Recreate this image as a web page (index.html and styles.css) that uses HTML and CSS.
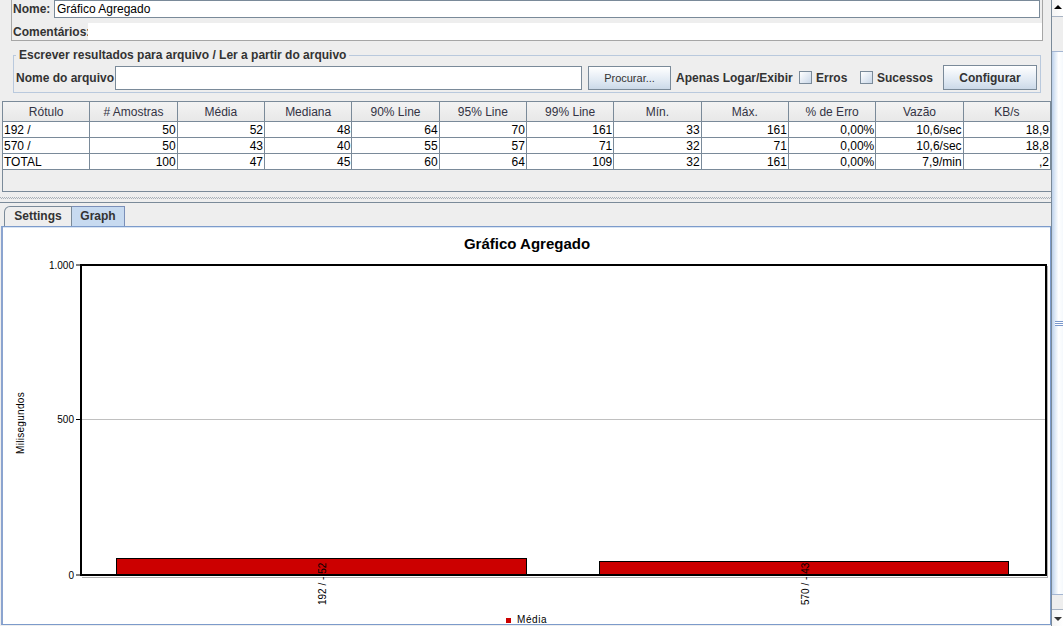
FILE: index.html
```html
<!DOCTYPE html>
<html>
<head>
<meta charset="utf-8">
<link rel="stylesheet" href="styles.css">
</head>
<body>
<div class="app">
  <div class="main">
    <div class="namebox">
      <div class="nrow">
        <span class="lbl lbl-nome">Nome:</span>
        <div class="nfield">Gráfico Agregado</div>
      </div>
      <div class="crow">
        <span class="lbl lbl-com">Comentários:</span>
        <div class="cfield"></div>
      </div>
    </div>
    <fieldset class="fs">
      <legend>Escrever resultados para arquivo / Ler a partir do arquivo</legend>
      <div class="frow">
        <span class="lbl lbl-file">Nome do arquivo</span>
        <div class="tfield"></div>
        <button class="btn btn-proc">Procurar...</button>
        <span class="lbl lbl-ap">Apenas Logar/Exibir</span>
        <span class="chk"></span><span class="lbl lbl-err">Erros</span>
        <span class="chk"></span><span class="lbl lbl-suc">Sucessos</span>
        <button class="btn btn-conf">Configurar</button>
      </div>
    </fieldset>
    <div class="pane">
      <table class="grid">
        <thead>
          <tr><th>Rótulo</th><th># Amostras</th><th>Média</th><th>Mediana</th><th>90% Line</th><th>95% Line</th><th>99% Line</th><th>Mín.</th><th>Máx.</th><th>% de Erro</th><th>Vazão</th><th>KB/s</th></tr>
        </thead>
        <tbody>
          <tr><td class="l">192 /</td><td>50</td><td>52</td><td>48</td><td>64</td><td>70</td><td>161</td><td>33</td><td>161</td><td>0,00%</td><td>10,6/sec</td><td>18,9</td></tr>
          <tr><td class="l">570 /</td><td>50</td><td>43</td><td>40</td><td>55</td><td>57</td><td>71</td><td>32</td><td>71</td><td>0,00%</td><td>10,6/sec</td><td>18,8</td></tr>
          <tr><td class="l">TOTAL</td><td>100</td><td>47</td><td>45</td><td>60</td><td>64</td><td>109</td><td>32</td><td>161</td><td>0,00%</td><td>7,9/min</td><td>,2</td></tr>
        </tbody>
      </table>
    </div>
    <div class="splitter"></div>
    <div class="lower">
      <div class="tabs">
        <div class="tab">Settings</div>
        <div class="tab sel">Graph</div>
      </div>
      <div class="tabpanel">
        <svg class="chart" width="1047" height="396" viewBox="3 228 1047 396" xmlns="http://www.w3.org/2000/svg">
          <text class="ctitle" x="527" y="249" text-anchor="middle">Gráfico Agregado</text>
          <line x1="82" y1="419.5" x2="1045" y2="419.5" stroke="#c0c0c0" stroke-width="1"/>
          <line x1="1047.5" y1="266" x2="1047.5" y2="578" stroke="#b0b0b0" stroke-width="1"/>
          <line x1="82" y1="577.5" x2="1048" y2="577.5" stroke="#b0b0b0" stroke-width="1"/>
          <rect x="116.5" y="558.5" width="410" height="17" fill="#cc0000" stroke="#000" stroke-width="1"/>
          <rect x="599.5" y="561.5" width="409" height="14" fill="#cc0000" stroke="#000" stroke-width="1"/>
          <rect x="81" y="265" width="965" height="310" fill="none" stroke="#000" stroke-width="2"/>
          <line x1="76" y1="265" x2="80" y2="265" stroke="#000"/>
          <line x1="76" y1="419.5" x2="80" y2="419.5" stroke="#000"/>
          <line x1="76" y1="575" x2="80" y2="575" stroke="#000"/>
          <text class="ytick" x="74" y="268.5" text-anchor="end">1.000</text>
          <text class="ytick" x="74" y="423" text-anchor="end">500</text>
          <text class="ytick" x="74" y="578.5" text-anchor="end">0</text>
          <text class="ylabel" transform="translate(24,423) rotate(-90)" text-anchor="middle">Milisegundos</text>
          <text class="blabel" transform="translate(326,605) rotate(-90)">192 / - 52</text>
          <text class="blabel" transform="translate(808.5,605) rotate(-90)">570 / - 43</text>
          <rect x="506" y="618" width="5" height="5" fill="#cc0000"/>
          <text class="legend" x="517" y="622.5">Média</text>
        </svg>
      </div>
    </div>
  </div>
  <div class="vscroll">
    <div class="sb-btn sb-up"><span class="tri-up"></span></div>
    <div class="sb-track sb-t1"></div>
    <div class="sb-thumb"><span class="grip"></span></div>
    <div class="sb-track sb-t2"></div>
    <div class="sb-btn sb-down"><span class="tri-down"></span></div>
  </div>
</div>
</body>
</html>
```

FILE: styles.css
```css
* { box-sizing: border-box; }
html, body { margin: 0; padding: 0; }
body {
  background: #eeeeee;
  font-family: "Liberation Sans", Arial, sans-serif;
  font-size: 12px;
  color: #000;
  overflow: hidden;
}
.app {
  display: flex;
  width: 1063px;
  height: 626px;
  overflow: hidden;
}
.main {
  width: 1051px;
  display: flex;
  flex-direction: column;
}
.lbl {
  font-weight: bold;
  color: #333333;
  white-space: nowrap;
}

/* name / comments box */
.namebox {
  margin-left: 11px;
  width: 1032px;
  height: 41px;
  border: 1px solid #a6a6a6;
  border-top: none;
  padding-left: 1px;
}
.nrow {
  display: flex;
  align-items: center;
  height: 18px;
}
.lbl-nome { width: 41px; }
.nfield {
  width: 986px;
  height: 18px;
  background: #fff;
  border: 1px solid #7a8a99;
  padding-left: 2px;
  line-height: 16px;
}
.crow {
  display: flex;
  align-items: center;
  margin-top: 5px;
  height: 17px;
}
.lbl-com { width: 75px; }
.cfield {
  flex: 1;
  height: 17px;
  background: #fff;
}

/* file fieldset */
.fs {
  margin: 7px 0 0 13px;
  width: 1028px;
  padding: 0 2px 2px 2px;
  border: 1px solid #b9c9dd;
  min-width: 0;
}
.fs legend {
  padding: 0 3px;
  font-weight: bold;
  color: #333333;
  line-height: 14px;
  font-size: 12px;
}
.frow {
  display: flex;
  align-items: center;
  margin-top: 3px;
  height: 25px;
}
.lbl-file { width: 99px; }
.tfield {
  width: 467px;
  height: 24px;
  background: #fff;
  border: 1px solid #7a8a99;
  margin-right: 6px;
}
.btn {
  font-family: "Liberation Sans", Arial, sans-serif;
  border: 1px solid #7a8a99;
  background: linear-gradient(#ffffff, #dce6f1 70%, #cbd9e8);
  color: #333333;
  padding: 0;
  margin: 0;
}
.btn-proc {
  width: 83px;
  height: 24px;
  font-size: 11px;
  margin-right: 5px;
}
.lbl-ap { width: 123px; }
.chk {
  width: 13px;
  height: 13px;
  border: 1px solid #7a8a99;
  background: linear-gradient(135deg, #ffffff, #c9d7e8);
  margin-right: 4px;
}
.lbl-err { width: 44px; }
.lbl-suc { width: 66px; }
.btn-conf {
  width: 94px;
  height: 25px;
  font-size: 12px;
  font-weight: bold;
}

/* results table */
.pane {
  margin-top: 8px;
  margin-left: 2px;
  width: 1049px;
  height: 91px;
  border: 1px solid #7a8a99;
  border-right: none;
}
.grid {
  width: 1048px;
  table-layout: fixed;
  border-collapse: separate;
  border-spacing: 0;
  font-size: 12px;
}
.grid th {
  height: 20px;
  padding: 0;
  font-weight: normal;
  color: #333344;
  text-align: center;
  background: linear-gradient(#f3f3f3, #e8e8e8);
  border-right: 1px solid #7a8a99;
  border-bottom: 1px solid #7a8a99;
  line-height: 18px;
}
.grid td {
  height: 16px;
  padding: 0 1px;
  text-align: right;
  background: #fff;
  border-right: 1px solid #7a8a99;
  border-bottom: 1px solid #7a8a99;
  line-height: 14px;
  white-space: nowrap;
}
.grid td.l { text-align: left; }

/* splitter */
.splitter {
  height: 10px;
  background: repeating-linear-gradient(90deg, #a8b0b8 0 1px, transparent 1px 2px) 0 5px / 100% 1px no-repeat,
              repeating-linear-gradient(90deg, transparent 0 1px, #a8b0b8 1px 2px) 0 6px / 100% 1px no-repeat;
}
.lower {
  border-top: 1px solid #7a8a99;
  padding-top: 3px;
}
.tabs {
  display: flex;
  height: 20px;
  padding-left: 4px;
}
.tab {
  height: 20px;
  border: 1px solid #7a8a99;
  border-bottom: none;
  border-top-left-radius: 6px;
  font-weight: bold;
  color: #333333;
  text-align: center;
  line-height: 19px;
  width: 68px;
}
.tab.sel {
  width: 53px;
  background: #c7daf0;
  border-color: #7a8fb8;
  border-left: none;
  border-top-left-radius: 0;
}
.tabpanel {
  margin-left: 1px;
  width: 1050px;
  height: 399px;
  border: 1px solid #7c9bcb;
  border-left: 2px solid #8ba4cf;
  padding-top: 1px;
  background: #d8e4f3;
}
.chart {
  display: block;
  background: #fff;
}
.ctitle {
  font-family: "Liberation Sans", Arial, sans-serif;
  font-size: 15px;
  font-weight: bold;
  fill: #000;
}
.ytick {
  font-family: "Liberation Sans", Arial, sans-serif;
  font-size: 10px;
  fill: #000;
}
.ylabel {
  font-family: "Liberation Sans", Arial, sans-serif;
  font-size: 10px;
  letter-spacing: 0.3px;
  fill: #000;
}
.blabel {
  font-family: "Liberation Sans", Arial, sans-serif;
  font-size: 10px;
  fill: #000;
}
.legend {
  font-family: "Liberation Sans", Arial, sans-serif;
  font-size: 10px;
  letter-spacing: 0.6px;
  fill: #000;
}

/* vertical scrollbar */
.vscroll {
  width: 12px;
  height: 626px;
  border-left: 1px solid #7a8a99;
  display: flex;
  flex-direction: column;
  background: #eeeeee;
}
.sb-btn {
  height: 17px;
  background: linear-gradient(90deg, #f4f4f4, #ffffff);
  display: flex;
  justify-content: center;
}
.sb-up { border-bottom: 1px solid #a8b4c4; align-items: flex-start; padding-top: 5px; }
.sb-down { border-top: 1px solid #a8b4c4; align-items: flex-start; padding-top: 7px; }
.tri-up {
  width: 0; height: 0;
  border-left: 4px solid transparent;
  border-right: 4px solid transparent;
  border-bottom: 4px solid #000;
}
.tri-down {
  width: 0; height: 0;
  border-left: 4px solid transparent;
  border-right: 4px solid transparent;
  border-top: 4px solid #333;
}
.sb-track { background: #eeeeee; }
.sb-t1 { height: 34px; }
.sb-t2 { height: 14px; }
.sb-thumb {
  height: 544px;
  border-top: 1px solid #a4b6d2;
  border-bottom: 1px solid #a4b6d2;
  background: linear-gradient(90deg, #bcd0ea 0, #dbe7f5 25%, #ffffff 60%, #f4f8fc 100%);
  display: flex;
  align-items: center;
  justify-content: flex-end;
}
.grip {
  width: 8px;
  height: 5px;
  background: repeating-linear-gradient(#7a98cc 0 1px, #ffffff 1px 2px);
}
```
